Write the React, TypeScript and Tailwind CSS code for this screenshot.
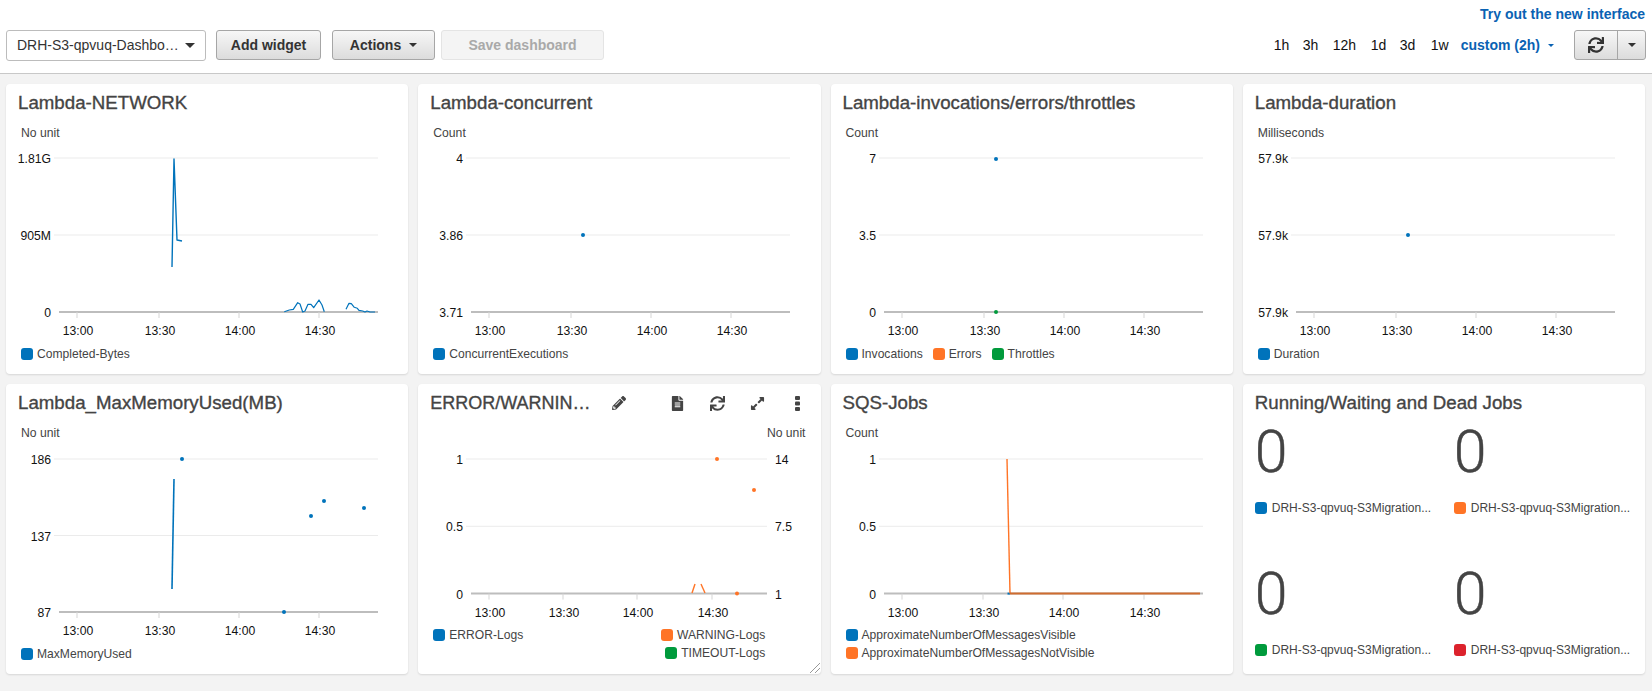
import type { ReactNode } from "react";
import { FaPencilAlt, FaFileAlt, FaSync, FaExpandAlt } from "react-icons/fa";

const BLUE = "#0073bb";
const ORANGE = "#ff7426";
const GREEN = "#009a3c";
const RED = "#dc222c";
const TICKS = ["13:00", "13:30", "14:00", "14:30"];
const TICK_X = [71, 153, 233, 313];

type Pt = [number, number];

type ChartProps = {
  top?: number;
  gap?: number;
  right?: number;
  labels: string[];
  ticks?: number[];
  rightLabels?: string[];
  children?: ReactNode;
};

// all coordinates are relative to the card
function Chart({ top = 74, gap = 77, right = 372, labels, ticks = TICK_X, rightLabels, children }: ChartProps) {
  const ys = [top, top + gap, top + gap * 2];
  const bottom = ys[2];
  return (
    <svg width="402" height="290" className="absolute left-0 top-0" style={{ fontFamily: "'Liberation Sans', Arial, sans-serif" }}>
      {ys.slice(0, 2).map((y) => (
        <line key={y} x1={48} x2={right} y1={y} y2={y} stroke="#ebebeb" strokeWidth="1" />
      ))}
      <line x1={53} x2={right} y1={bottom} y2={bottom} stroke="#bdbdbd" strokeWidth="2" />
      {labels.map((l, i) => (
        <text key={i} x={45} y={ys[i] + 5} textAnchor="end" fontSize="12.2" fill="#111">
          {l}
        </text>
      ))}
      {rightLabels?.map((l, i) => (
        <text key={i} x={right + 8} y={ys[i] + 5} fontSize="12.2" fill="#111">
          {l}
        </text>
      ))}
      {ticks.map((x, i) => (
        <g key={x}>
          <line x1={x} x2={x} y1={bottom} y2={bottom + 6} stroke="#d5d5d5" />
          <text x={x + 1} y={bottom + 23} textAnchor="middle" fontSize="12.2" fill="#111">
            {TICKS[i]}
          </text>
        </g>
      ))}
      {children}
    </svg>
  );
}

function Line({ pts, color = BLUE, width = 1.4 }: { pts: Pt[]; color?: string; width?: number }) {
  return <polyline points={pts.map((p) => p.join(",")).join(" ")} fill="none" stroke={color} strokeWidth={width} strokeLinejoin="round" />;
}

function Dot({ x, y, color = BLUE }: { x: number; y: number; color?: string }) {
  return <circle cx={x} cy={y} r="2" fill={color} />;
}

function Legend({ color, label }: { color: string; label: string }) {
  return (
    <div className="flex items-center gap-1 text-[12.1px] leading-[18px] text-[#444]">
      <span className="h-3 w-3 shrink-0 rounded-[3px]" style={{ backgroundColor: color }} />
      <span className="whitespace-nowrap">{label}</span>
    </div>
  );
}

function Card({ title, children }: { title?: string; children?: ReactNode }) {
  return (
    <div className="relative h-[290px] rounded-[4px] bg-white shadow-[0_1px_2px_rgba(0,0,0,0.12)]">
      {title && <h2 className="absolute left-3 top-[9px] z-10 whitespace-nowrap text-[18.7px] leading-5 text-[#444] [-webkit-text-stroke:0.35px_#444]">{title}</h2>}
      {children}
    </div>
  );
}

function UnitLabel({ text }: { text: string }) {
  return <span className="absolute left-[15px] top-[42px] text-[12.2px] leading-[14px] text-[#444]">{text}</span>;
}

function LegendRow({ items, top = 261 }: { items: [string, string][]; top?: number }) {
  return (
    <div className="absolute left-[15px] flex flex-col" style={{ top }}>
      {items.map(([color, label]) => (
        <Legend key={label} color={color} label={label} />
      ))}
    </div>
  );
}

function Stat({ color }: { color: string }) {
  return (
    <div className="h-[142px]">
      <div className="font-['Roboto'] text-[59px] font-light leading-[68px] text-[#444] [-webkit-text-stroke:0.4px_#444]">0</div>
      <div className="mt-[13px] flex items-center gap-[5px] text-[12px] leading-[18px] text-[#444]">
        <span className="h-3 w-3 shrink-0 rounded-[3px]" style={{ backgroundColor: color }} />
        <span className="whitespace-nowrap">DRH-S3-qpvuq-S3Migration...</span>
      </div>
    </div>
  );
}

function Btn({ label, caret, disabled, className }: { label: string; caret?: boolean; disabled?: boolean; className: string }) {
  return (
    <button
      className={`flex h-[30px] items-center justify-center gap-2 rounded-[3px] border text-[14px] font-bold ${className} ${
        disabled
          ? "border-[#e4e4e4] bg-[#f4f4f4] text-[#a9a9a9]"
          : "border-[#a6a6a6] bg-gradient-to-b from-[#f7f7f7] to-[#dcdcdc] text-[#333]"
      }`}
    >
      {label}
      {caret && <span className="h-0 w-0 border-x-[4px] border-t-[4px] border-x-transparent border-t-[#333]" />}
    </button>
  );
}

export default function App() {
  return (
    <div className="h-[691px] w-[1652px] overflow-hidden bg-[#f3f3f3] font-['Liberation_Sans',Arial,sans-serif]">
      <header className="h-[74px] border-b border-[#c8c8c8] bg-white px-[6px]">
        <div className="flex justify-end pr-[1px] pt-[6px] text-[14px] font-bold leading-4 text-[#0a62b3]">Try out the new interface</div>
        <div className="mt-2 flex items-start">
          <div className="flex h-[31px] w-[200px] items-center justify-between rounded-[3px] border border-[#bcbcbc] bg-white pl-[10px] pr-[10px] text-[14px] text-[#333]">
            <span className="whitespace-nowrap">DRH-S3-qpvuq-Dashbo…</span>
            <span className="h-0 w-0 border-x-[5px] border-t-[5px] border-x-transparent border-t-[#333]" />
          </div>
          <div className="ml-[10px] flex">
            <Btn label="Add widget" className="w-[105px]" />
            <Btn label="Actions" caret className="ml-[11px] w-[103px]" />
            <Btn label="Save dashboard" disabled className="ml-[6px] w-[163px]" />
          </div>
          <div className="ml-auto flex h-[30px] items-center text-[14px] text-[#111]">
            <span className="w-[29px]">1h</span>
            <span className="w-[30px]">3h</span>
            <span className="w-[38px]">12h</span>
            <span className="w-[29px]">1d</span>
            <span className="w-[31px]">3d</span>
            <span className="w-[30px]">1w</span>
            <span className="font-bold text-[#0a62b3]">custom (2h)</span>
            <span className="ml-2 h-0 w-0 border-x-[3px] border-t-[3px] border-x-transparent border-t-[#0a62b3]" />
            <div className="ml-5 flex h-[30px] w-[72px] overflow-hidden rounded-[3px] border border-[#a6a6a6] bg-gradient-to-b from-[#f7f7f7] to-[#dcdcdc]">
              <div className="flex w-[43px] items-center justify-center border-r border-[#a6a6a6]">
                <FaSync className="h-4 w-4 text-[#333]" />
              </div>
              <div className="flex flex-1 items-center justify-center">
                <span className="h-0 w-0 border-x-[4px] border-t-[4px] border-x-transparent border-t-[#333]" />
              </div>
            </div>
          </div>
        </div>
      </header>

      <main className="grid grid-cols-4 gap-[10px] pl-[6px] pr-[7px] pt-[10px]">
        <Card title="Lambda-NETWORK">
          <UnitLabel text="No unit" />
          <Chart labels={["1.81G", "905M", "0"]}>
            <Line pts={[[166, 183], [168, 75], [171, 156], [176, 157]]} />
            <Line
              pts={[[278.3, 227.7], [283.3, 226], [287.3, 225.3], [291.7, 218.7], [294, 220], [296.7, 228], [299, 227], [302, 220.3], [305, 220.3], [307.7, 223.7], [313, 216], [316, 221], [318.3, 227.7]]}
              width={1.2}
            />
            <Line
              pts={[[340, 225.3], [343, 219.3], [345.3, 219.7], [348.3, 223.3], [351.3, 224.3], [353, 226.3], [356.7, 227], [359, 228], [361, 227], [364, 228], [369, 228]]}
              width={1.2}
            />
          </Chart>
          <LegendRow items={[[BLUE, "Completed-Bytes"]]} />
        </Card>

        <Card title="Lambda-concurrent">
          <UnitLabel text="Count" />
          <Chart labels={["4", "3.86", "3.71"]}>
            <Dot x={165} y={151} />
          </Chart>
          <LegendRow items={[[BLUE, "ConcurrentExecutions"]]} />
        </Card>

        <Card title="Lambda-invocations/errors/throttles">
          <UnitLabel text="Count" />
          <Chart labels={["7", "3.5", "0"]}>
            <Dot x={165} y={75} />
            <Dot x={165} y={228} color={GREEN} />
          </Chart>
          <div className="absolute left-[15px] top-[261px] flex gap-[10px]">
            <Legend color={BLUE} label="Invocations" />
            <Legend color={ORANGE} label="Errors" />
            <Legend color={GREEN} label="Throttles" />
          </div>
        </Card>

        <Card title="Lambda-duration">
          <UnitLabel text="Milliseconds" />
          <Chart labels={["57.9k", "57.9k", "57.9k"]}>
            <Dot x={165} y={151} />
          </Chart>
          <LegendRow items={[[BLUE, "Duration"]]} />
        </Card>

        <Card title="Lambda_MaxMemoryUsed(MB)">
          <UnitLabel text="No unit" />
          <Chart top={75} gap={76.5} labels={["186", "137", "87"]}>
            <Line pts={[[166, 205], [168, 95]]} width={1.6} />
            <Dot x={176} y={75} />
            <Dot x={305} y={132} />
            <Dot x={318} y={117} />
            <Dot x={358} y={124} />
            <Dot x={278} y={228} />
          </Chart>
          <LegendRow items={[[BLUE, "MaxMemoryUsed"]]} />
        </Card>

        <Card>
          <div className="absolute left-3 top-[9px] z-10 flex items-center text-[#444]">
            <h2 className="w-[172px] whitespace-nowrap text-[18px] leading-5 [-webkit-text-stroke:0.35px_#444]">ERROR/WARNIN…</h2>
            <FaPencilAlt className="ml-[10px] h-[14px] w-[14px]" />
            <FaFileAlt className="ml-[45px] h-[15px] w-[13px]" />
            <FaSync className="ml-[26px] h-[15px] w-[15px]" />
            <FaExpandAlt className="ml-[25px] h-[15px] w-[15px]" />
            <svg width="5" height="15" className="ml-[30px]" fill="#444">
              <rect x="0" y="0" width="5" height="4" rx="1" />
              <rect x="0" y="5.5" width="5" height="4" rx="1" />
              <rect x="0" y="11" width="5" height="4" rx="1" />
            </svg>
          </div>
          <span className="absolute right-[15px] top-[42px] text-[12.2px] leading-[14px] text-[#444]">No unit</span>
          <Chart top={75} gap={67.3} right={349} labels={["1", "0.5", "0"]} rightLabels={["14", "7.5", "1"]} ticks={[71, 145, 219, 294]}>
            <Line pts={[[274, 209], [277, 200]]} color={ORANGE} />
            <Line pts={[[283, 200], [287, 209]]} color={ORANGE} />
            <Dot x={299} y={75} color={ORANGE} />
            <Dot x={336} y={106} color={ORANGE} />
            <Dot x={319} y={209.6} color={ORANGE} />
          </Chart>
          <div className="absolute left-[15px] top-[242px] w-[332px]">
            <div className="flex justify-between">
              <Legend color={BLUE} label="ERROR-Logs" />
              <Legend color={ORANGE} label="WARNING-Logs" />
            </div>
            <div className="flex justify-end">
              <Legend color={GREEN} label="TIMEOUT-Logs" />
            </div>
          </div>
          <svg width="12" height="12" className="absolute bottom-0 right-0" stroke="#999">
            <line x1="1" y1="11" x2="11" y2="1" />
            <line x1="6" y1="11" x2="11" y2="6" />
          </svg>
        </Card>

        <Card title="SQS-Jobs">
          <UnitLabel text="Count" />
          <Chart top={75} gap={67.3} labels={["1", "0.5", "0"]} ticks={[71, 152, 232, 313]}>
            <Line pts={[[176.5, 209.6], [179, 209.6]]} width={2} />
            <Line pts={[[176, 75], [179, 209.6]]} color={ORANGE} />
            <Line pts={[[179, 209.6], [369, 209.6]]} color="#cf6c2f" width={2} />
          </Chart>
          <LegendRow top={242} items={[[BLUE, "ApproximateNumberOfMessagesVisible"], [ORANGE, "ApproximateNumberOfMessagesNotVisible"]]} />
        </Card>

        <Card title="Running/Waiting and Dead Jobs">
          <div className="absolute left-3 top-[34px] grid grid-cols-[199px_180px]">
            <Stat color={BLUE} />
            <Stat color={ORANGE} />
            <Stat color={GREEN} />
            <Stat color={RED} />
          </div>
        </Card>
      </main>
    </div>
  );
}
